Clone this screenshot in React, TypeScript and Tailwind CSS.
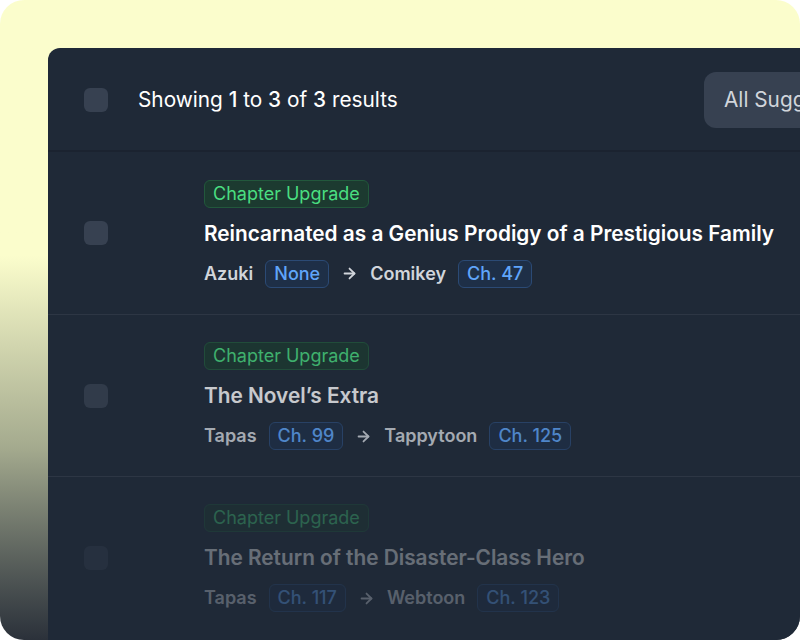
import { ArrowRight } from 'lucide-react'

interface Suggestion {
  title: string
  from: string
  fromCh: string
  to: string
  toCh: string
  fade: string
}

const suggestions: Suggestion[] = [
  { title: 'Reincarnated as a Genius Prodigy of a Prestigious Family', from: 'Azuki', fromCh: 'None', to: 'Comikey', toCh: 'Ch. 47', fade: 'opacity-100' },
  { title: 'The Novel’s Extra', from: 'Tapas', fromCh: 'Ch. 99', to: 'Tappytoon', toCh: 'Ch. 125', fade: 'opacity-75' },
  { title: 'The Return of the Disaster-Class Hero', from: 'Tapas', fromCh: 'Ch. 117', to: 'Webtoon', toCh: 'Ch. 123', fade: 'opacity-[0.32]' },
]

function Checkbox() {
  return <div className="w-6 h-6 shrink-0 rounded-md bg-[#374151]" />
}

function ChapterChip({ label }: { label: string }) {
  return (
    <span className="h-7 px-2 flex items-center rounded-md border border-[#2b4a75] bg-[#1e3a5f]/40 text-[#60a5fa] text-lg font-medium">
      {label}
    </span>
  )
}

function Row({ s, first }: { s: Suggestion; first: boolean }) {
  return (
    <div className={`h-[162px] flex items-center pl-9 ${first ? '' : 'border-t border-[#2d3644]'}`}>
      <div className={`flex items-center ${s.fade}`}>
        <Checkbox />
        <div className="ml-24 pt-px flex flex-col items-start gap-3">
          <span className="h-7 px-2 flex items-center rounded-md border border-[#22583c] bg-[#1c3a30] text-[#4ade80] text-lg">
            Chapter Upgrade
          </span>
          <h3 className="text-[20.8px] leading-7 font-semibold text-white whitespace-nowrap">{s.title}</h3>
          <div className="flex items-center gap-3 text-lg font-semibold text-[#d1d5db]">
            <span>{s.from}</span>
            <ChapterChip label={s.fromCh} />
            <ArrowRight className="w-[17px] h-[17px]" strokeWidth={2.5} />
            <span>{s.to}</span>
            <ChapterChip label={s.toCh} />
          </div>
        </div>
      </div>
    </div>
  )
}

export default function App() {
  return (
    <div className="bg-white w-[800px] h-[640px]" style={{ fontFamily: 'Inter, "Noto Sans", sans-serif' }}>
      <div className="w-[800px] h-[640px] rounded-3xl overflow-hidden pt-12 pl-12 bg-gradient-to-b from-[#fbfdcc] from-40% via-[#a4aa8e] via-70% to-[#2b313a]">
        <div className="w-[856px] h-[592px] rounded-tl-xl bg-[#1f2937] overflow-hidden">
          <div className="h-[104px] pt-0.5 flex items-center pl-9 border-b-2 border-[#1b2330]">
            <Checkbox />
            <p className="ml-[30px] text-[20.8px] text-white">
              Showing <span className="font-medium">1</span> to <span className="font-medium">3</span> of{' '}
              <span className="font-medium">3</span> results
            </p>
            <button className="ml-auto h-14 px-5 rounded-xl bg-[#374151] text-[20.8px] text-[#d1d5db] whitespace-nowrap w-[200px] text-left">
              All Suggestions
            </button>
          </div>
          {suggestions.map((s, i) => (
            <Row key={i} s={s} first={i === 0} />
          ))}
        </div>
      </div>
    </div>
  )
}
